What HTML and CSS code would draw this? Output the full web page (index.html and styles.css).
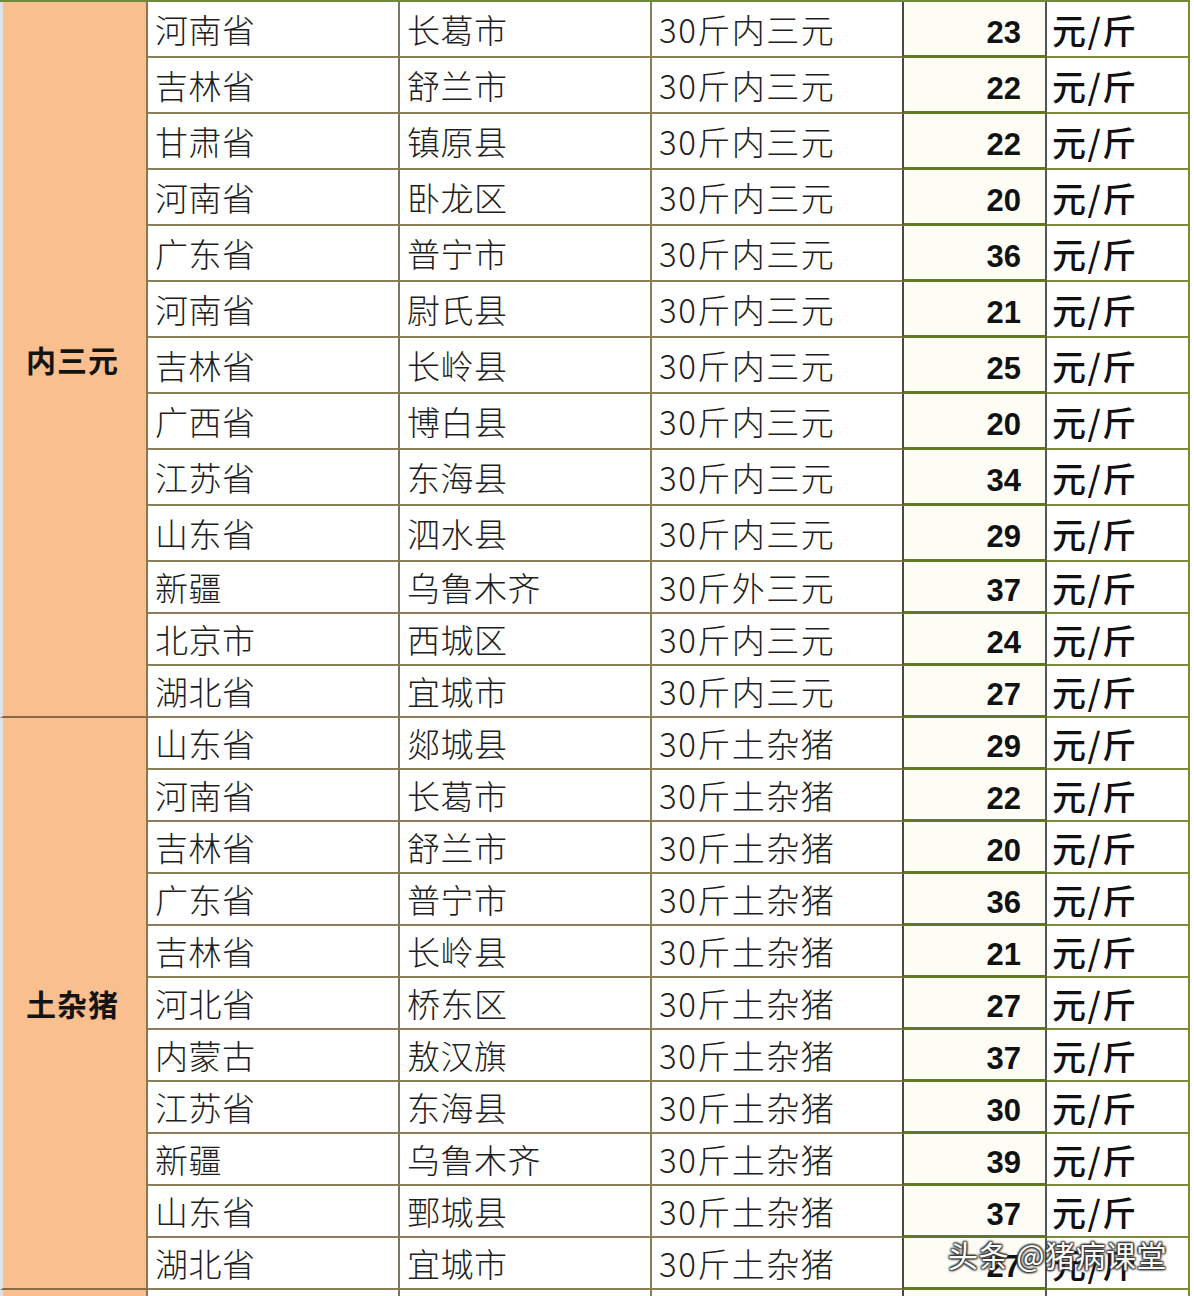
FILE: index.html
```html
<!DOCTYPE html>
<html lang="zh">
<head>
<meta charset="utf-8">
<title>价格表</title>
<link rel="stylesheet" href="styles.css">
</head>
<body>
<div class="sheet">
  <div class="label s1">内三元</div>
  <div class="c p">河南省</div><div class="c a">长葛市</div><div class="c t">30斤内三元</div><div class="c n">23</div><div class="c u">元/斤</div>
  <div class="c p">吉林省</div><div class="c a">舒兰市</div><div class="c t">30斤内三元</div><div class="c n">22</div><div class="c u">元/斤</div>
  <div class="c p">甘肃省</div><div class="c a">镇原县</div><div class="c t">30斤内三元</div><div class="c n">22</div><div class="c u">元/斤</div>
  <div class="c p">河南省</div><div class="c a">卧龙区</div><div class="c t">30斤内三元</div><div class="c n">20</div><div class="c u">元/斤</div>
  <div class="c p">广东省</div><div class="c a">普宁市</div><div class="c t">30斤内三元</div><div class="c n">36</div><div class="c u">元/斤</div>
  <div class="c p">河南省</div><div class="c a">尉氏县</div><div class="c t">30斤内三元</div><div class="c n">21</div><div class="c u">元/斤</div>
  <div class="c p">吉林省</div><div class="c a">长岭县</div><div class="c t">30斤内三元</div><div class="c n">25</div><div class="c u">元/斤</div>
  <div class="c p">广西省</div><div class="c a">博白县</div><div class="c t">30斤内三元</div><div class="c n">20</div><div class="c u">元/斤</div>
  <div class="c p">江苏省</div><div class="c a">东海县</div><div class="c t">30斤内三元</div><div class="c n">34</div><div class="c u">元/斤</div>
  <div class="c p">山东省</div><div class="c a">泗水县</div><div class="c t">30斤内三元</div><div class="c n">29</div><div class="c u">元/斤</div>
  <div class="c p">新疆</div><div class="c a">乌鲁木齐</div><div class="c t">30斤外三元</div><div class="c n">37</div><div class="c u">元/斤</div>
  <div class="c p">北京市</div><div class="c a">西城区</div><div class="c t">30斤内三元</div><div class="c n">24</div><div class="c u">元/斤</div>
  <div class="c p">湖北省</div><div class="c a">宜城市</div><div class="c t">30斤内三元</div><div class="c n">27</div><div class="c u">元/斤</div>

  <div class="label s2">土杂猪</div>
  <div class="c p">山东省</div><div class="c a">郯城县</div><div class="c t">30斤土杂猪</div><div class="c n">29</div><div class="c u">元/斤</div>
  <div class="c p">河南省</div><div class="c a">长葛市</div><div class="c t">30斤土杂猪</div><div class="c n">22</div><div class="c u">元/斤</div>
  <div class="c p">吉林省</div><div class="c a">舒兰市</div><div class="c t">30斤土杂猪</div><div class="c n">20</div><div class="c u">元/斤</div>
  <div class="c p">广东省</div><div class="c a">普宁市</div><div class="c t">30斤土杂猪</div><div class="c n">36</div><div class="c u">元/斤</div>
  <div class="c p">吉林省</div><div class="c a">长岭县</div><div class="c t">30斤土杂猪</div><div class="c n">21</div><div class="c u">元/斤</div>
  <div class="c p">河北省</div><div class="c a">桥东区</div><div class="c t">30斤土杂猪</div><div class="c n">27</div><div class="c u">元/斤</div>
  <div class="c p">内蒙古</div><div class="c a">敖汉旗</div><div class="c t">30斤土杂猪</div><div class="c n">37</div><div class="c u">元/斤</div>
  <div class="c p">江苏省</div><div class="c a">东海县</div><div class="c t">30斤土杂猪</div><div class="c n">30</div><div class="c u">元/斤</div>
  <div class="c p">新疆</div><div class="c a">乌鲁木齐</div><div class="c t">30斤土杂猪</div><div class="c n">39</div><div class="c u">元/斤</div>
  <div class="c p">山东省</div><div class="c a">鄄城县</div><div class="c t">30斤土杂猪</div><div class="c n">37</div><div class="c u">元/斤</div>
  <div class="c p">湖北省</div><div class="c a">宜城市</div><div class="c t">30斤土杂猪</div><div class="c n">27</div><div class="c u">元/斤</div>

  <div class="label s3"></div>
  <div class="c p"></div><div class="c a"></div><div class="c t"></div><div class="c n"></div><div class="c u"></div>
</div>
<div class="watermark">头条 @猪病课堂</div>
</body>
</html>
```

FILE: styles.css
```css
html, body {
  margin: 0;
  padding: 0;
  background: #ffffff;
}

body {
  position: relative;
  width: 1194px;
  height: 1296px;
  overflow: hidden;
  font-family: "Noto Sans CJK SC", "Noto Sans", sans-serif;
  color: #1c1c1c;
}

.sheet {
  display: grid;
  grid-template-columns: 148px 252px 252px 252px 143px 143px;
  grid-template-rows: repeat(10, 56px) repeat(14, 52px) 40px;
  border-top: 2px solid #6f8a3c;
  width: 1190px;
}

.label {
  grid-column: 1;
  background: #f9bf8f;
  border-left: 3px solid #e2e2e2;
  border-right: 2px solid #8a7650;
  border-bottom: 2px solid #8a6a42;
  box-sizing: border-box;
  display: flex;
  align-items: center;
  justify-content: center;
  font-size: 30px;
  font-weight: 700;
  color: #141414;
  padding-right: 4px;
  letter-spacing: 1px;
}

.s1 { grid-row: 1 / span 13; }
.s2 { grid-row: 14 / span 11; }
.s3 { grid-row: 25; }

.c {
  box-sizing: border-box;
  border-right: 2px solid #8a7d58;
  border-bottom: 2px solid #8a7d58;
  display: flex;
  align-items: center;
  font-size: 33px;
  line-height: 1;
  white-space: nowrap;
  overflow: hidden;
}

.p, .a, .t {
  padding-left: 7px;
  font-weight: 300;
  color: #1e1e1e;
  letter-spacing: 0.5px;
}

.t { letter-spacing: 1.5px; }

.p { border-right-color: #7d7560; }
.t { border-right-color: #4a4a40; }

.n {
  justify-content: flex-end;
  padding-right: 24px;
  padding-top: 7px;
  font-family: "Liberation Sans", Arial, sans-serif;
  font-weight: 700;
  font-size: 31px;
  color: #111;
  background: #fdfdf6;
  border-bottom: 3px solid #5f7a22;
  border-right: 2px solid #555;
}

.u {
  padding-left: 5px;
  padding-top: 2px;
  font-weight: 500;
  font-size: 34px;
  letter-spacing: 1.5px;
  color: #111;
  border-bottom-color: #7c8a3c;
  border-right-color: #7c8a3c;
}

.watermark {
  position: absolute;
  left: 948px;
  top: 1232px;
  font-family: "Noto Sans CJK SC", sans-serif;
  font-size: 30px;
  font-weight: 400;
  color: #ffffff;
  letter-spacing: 0.5px;
  text-shadow: 0 0 2px #333, 1px 1px 2px #333, -1px -1px 2px #333, 1px -1px 2px #333, -1px 1px 2px #333;
  white-space: nowrap;
}
```
